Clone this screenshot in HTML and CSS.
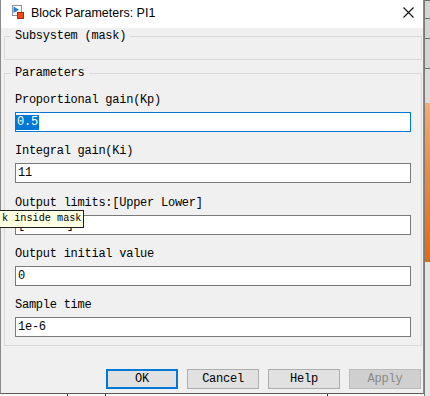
FILE: index.html
```html
<!DOCTYPE html>
<html lang="en">
<head>
    <meta charset="UTF-8">
    <meta name="viewport" content="width=device-width, initial-scale=1.0">
    <title>Block Parameters: PI1</title>
    <link rel="stylesheet" href="styles.css">
</head>
<body>
    <div class="screen">
        <div class="left">
            <div class="window">
                <div class="titlebar">
                    <svg class="app-icon" width="12" height="14" viewBox="0 0 12 14">
                        <rect x="0.5" y="0.5" width="9" height="10" fill="#fff" stroke="#8a93a0"/>
                        <path d="M1.5 1.5 L7 4.8 L1.5 8 Z" fill="#1d7fd8"/>
                        <rect x="5.5" y="7.5" width="6" height="6" fill="#f04a1a" stroke="#b02c10"/>
                    </svg>
                    <span class="title">Block Parameters: PI1</span>
                    <svg class="close" width="11" height="11" viewBox="0 0 11 11">
                        <path d="M0.5 0.5 L10.5 10.5 M10.5 0.5 L0.5 10.5" stroke="#111" stroke-width="1.1"/>
                    </svg>
                </div>

                <div class="dialog">
                    <fieldset class="group group-mask">
                        <legend>Subsystem (mask)</legend>
                        <div class="mask-desc"></div>
                    </fieldset>

                    <fieldset class="group group-params">
                        <legend>Parameters</legend>
                        <div class="param-list">
                            <div class="param">
                                <div class="param-label">Proportional gain(Kp)</div>
                                <div class="field focused"><span class="sel">0.5</span></div>
                            </div>
                            <div class="param">
                                <div class="param-label">Integral gain(Ki)</div>
                                <div class="field">11</div>
                            </div>
                            <div class="param">
                                <div class="param-label">Output limits:[Upper Lower]</div>
                                <div class="field">[10 -10]</div>
                            </div>
                            <div class="param">
                                <div class="param-label">Output initial value</div>
                                <div class="field">0</div>
                            </div>
                            <div class="param">
                                <div class="param-label">Sample time</div>
                                <div class="field">1e-6</div>
                            </div>
                        </div>
                    </fieldset>

                    <div class="buttons">
                        <button class="btn btn-default">OK</button>
                        <button class="btn">Cancel</button>
                        <button class="btn">Help</button>
                        <button class="btn" disabled>Apply</button>
                    </div>
                </div>
            </div>
            <div class="underneath">
                <div class="seg seg-a"></div>
                <div class="seg seg-b"></div>
                <div class="seg seg-c"></div>
                <div class="seg seg-d"></div>
            </div>
        </div>

        <div class="side">
            <div class="side-row side-1"></div>
            <div class="side-row side-2"></div>
            <div class="side-row side-3"></div>
            <div class="side-row side-4"></div>
            <div class="side-block"></div>
            <div class="side-rest"></div>
        </div>

        <div class="tooltip">k inside mask</div>
    </div>
</body>
</html>
```

FILE: styles.css
```css
* {
    box-sizing: border-box;
}

body {
    margin: 0;
    width: 430px;
    height: 396px;
    overflow: hidden;
    background-color: #f4f4f4;
    font-family: "Liberation Mono", "DejaVu Sans Mono", monospace;
    color: #000;
}

.screen {
    position: relative;
    display: flex;
    height: 396px;
}

.left {
    width: 424px;
    display: flex;
    flex-direction: column;
}

/* dialog window */
.window {
    height: 394px;
    display: flex;
    flex-direction: column;
    background-color: #f0f0f0;
    border-left: 1px solid #8a8a8a;
    border-right: 1px solid #8a8a8a;
    border-bottom: 1px solid #5c5c5c;
}

.titlebar {
    height: 28px;
    flex: none;
    display: flex;
    align-items: flex-start;
    padding: 5px 0 0 11px;
    background-color: #fff;
}

.app-icon {
    flex: none;
}

.title {
    margin-left: 7px;
    font-family: "Liberation Sans", Arial, sans-serif;
    font-size: 12.5px;
    line-height: 16px;
    color: #000;
}

.close {
    margin: 2px 9px 0 auto;
    flex: none;
}

.dialog {
    flex: 1;
    display: flex;
    flex-direction: column;
    padding: 0 1px 0 3px;
}

.group {
    margin: 0;
    padding: 0 10px;
    border: 1px solid #d9d9d9;
    min-width: 0;
}

.group legend {
    margin-left: -4px;
    padding: 0 4px;
    font-size: 12px;
    line-height: 14px;
    letter-spacing: -0.25px;
}

.group-mask {
    margin-top: 1px;
}

.mask-desc {
    height: 16px;
}

.group-params {
    margin-top: 6px;
    padding: 13px 10px 8px;
}

.param-list {
    display: flex;
    flex-direction: column;
    gap: 12.25px;
}

.param-label {
    font-size: 12px;
    line-height: 14px;
    letter-spacing: -0.25px;
    margin-bottom: 5px;
    white-space: nowrap;
}

.field {
    height: 20px;
    display: flex;
    align-items: center;
    padding: 0 2px;
    background-color: #fff;
    border: 1px solid #7a7a7a;
    font-size: 12px;
    letter-spacing: -0.25px;
    white-space: nowrap;
}

.field.focused {
    border-color: #0078d7;
    padding-left: 0;
}

.sel {
    height: 15px;
    line-height: 15px;
    padding: 0 1px;
    background-color: #0078d7;
    color: #fff;
}

.buttons {
    display: flex;
    justify-content: flex-end;
    gap: 9px;
    margin-top: 23px;
    padding-right: 1px;
}

.btn {
    width: 72px;
    height: 20px;
    padding: 0;
    font-family: "Liberation Mono", "DejaVu Sans Mono", monospace;
    font-size: 12px;
    letter-spacing: -0.25px;
    color: #000;
    background-color: #e1e1e1;
    border: 1px solid #adadad;
    border-radius: 0;
}

.btn-default {
    border: 2px solid #0078d7;
}

.btn:disabled {
    color: #8a8a8a;
    background-color: #cfcfcf;
    border-color: #bcbcbc;
}

/* what is behind the dialog */
.underneath {
    flex: 1;
    display: flex;
    background-color: #f8f8f8;
}

.seg {
    height: 100%;
}

.seg-a {
    width: 67px;
}

.seg-b {
    width: 38px;
    border-left: 1px solid #333;
}

.seg-c {
    width: 222px;
    border-left: 1px solid #333;
}

.seg-d {
    flex: 1;
    border-left: 1px solid #333;
}

.side {
    width: 6px;
    display: flex;
    flex-direction: column;
    border-left: 1px solid #7c7c7c;
    background-color: #d6d4ce;
}

.side-row {
    border-top: 1px solid #6e6e6e;
}

.side-1 {
    height: 18px;
}

.side-2 {
    height: 20px;
}

.side-3 {
    height: 30px;
}

.side-4 {
    height: 35px;
    background-color: #dedcd6;
}

.side-block {
    height: 159px;
    background: linear-gradient(#eeae76, #e88c44 45%, #df6a12);
}

.side-rest {
    flex: 1;
    background-color: #e6e6e6;
}

/* hover tip, its left part runs off the screen */
.tooltip {
    position: absolute;
    left: -1px;
    top: 210px;
    height: 18px;
    padding: 0 2px 0 2px;
    border: 1px solid #1e1e1e;
    background-color: #ffffe1;
    font-size: 10.2px;
    line-height: 16px;
    white-space: nowrap;
}
```
